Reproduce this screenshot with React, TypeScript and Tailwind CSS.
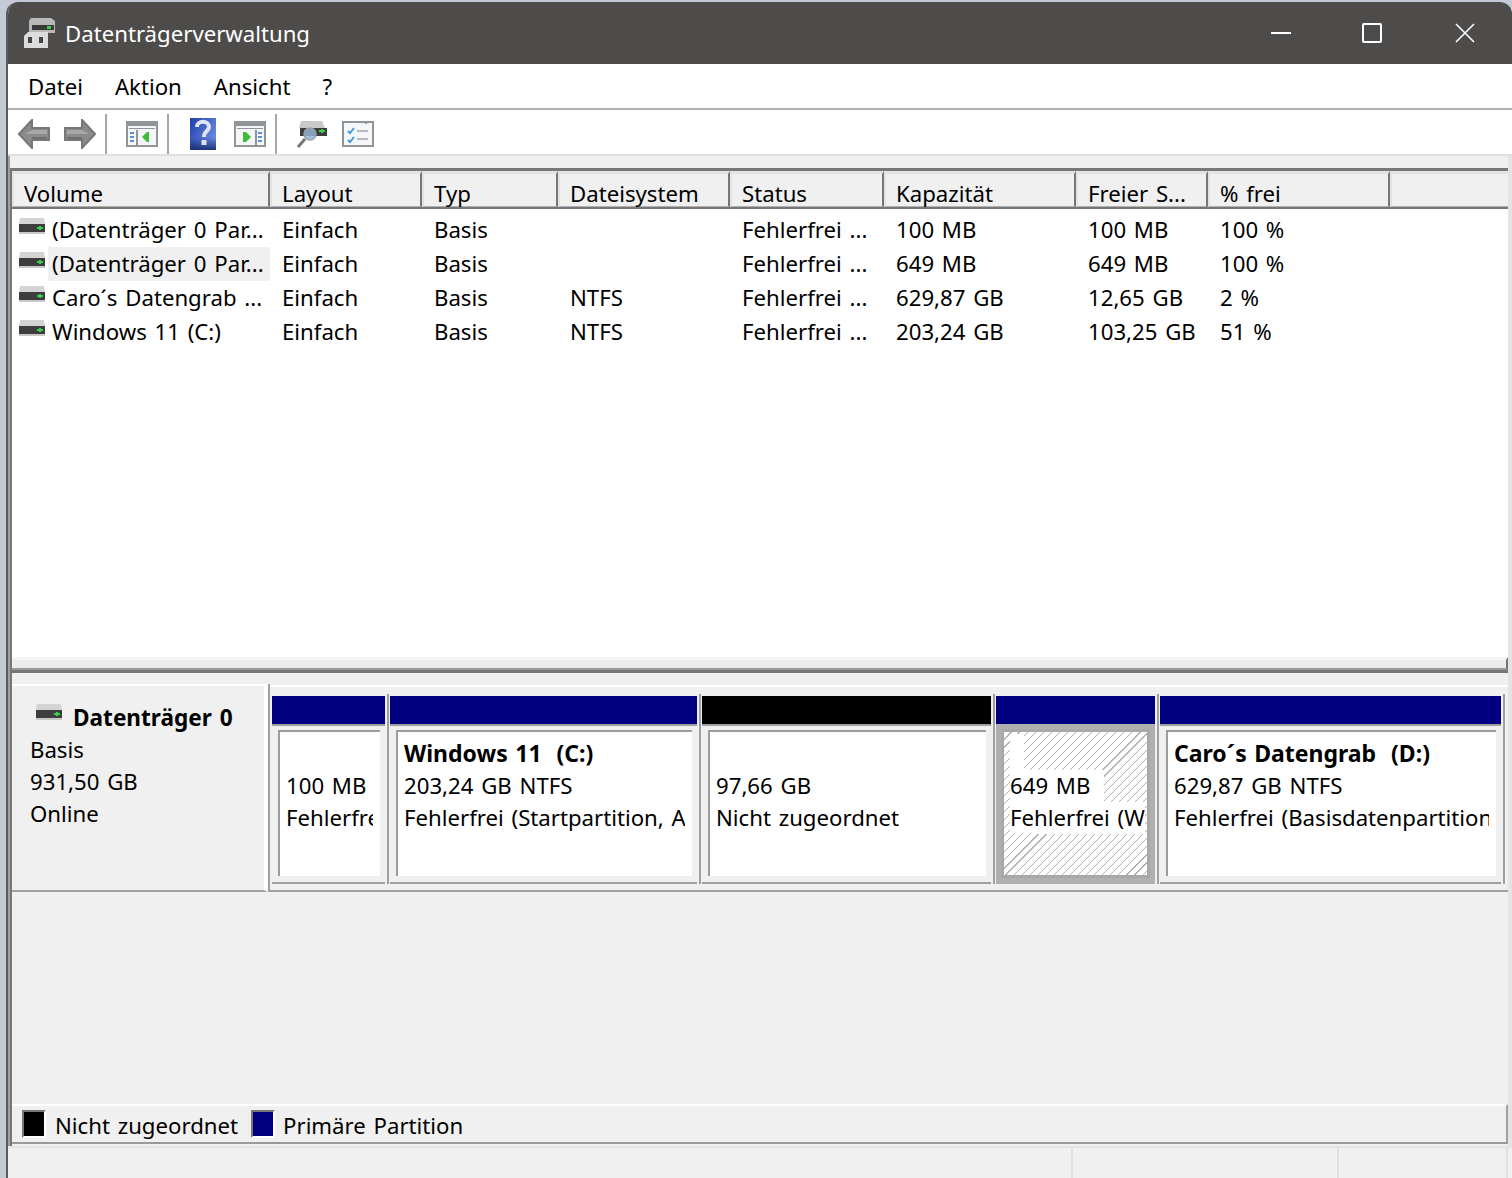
const columns = [
  { label: "Volume", width: "w-[258px]" },
  { label: "Layout", width: "w-[152px]" },
  { label: "Typ", width: "w-[136px]" },
  { label: "Dateisystem", width: "w-[172px]" },
  { label: "Status", width: "w-[154px]" },
  { label: "Kapazität", width: "w-[192px]" },
  { label: "Freier S...", width: "w-[132px]" },
  { label: "% frei", width: "w-[182px]" },
  { label: "", width: "flex-1" },
];

const rows = [
  { volume: "(Datenträger 0 Par...", layout: "Einfach", typ: "Basis", fs: "", status: "Fehlerfrei ...", cap: "100 MB", free: "100 MB", pct: "100 %" },
  { volume: "(Datenträger 0 Par...", layout: "Einfach", typ: "Basis", fs: "", status: "Fehlerfrei ...", cap: "649 MB", free: "649 MB", pct: "100 %", selected: true },
  { volume: "Caro´s Datengrab ...", layout: "Einfach", typ: "Basis", fs: "NTFS", status: "Fehlerfrei ...", cap: "629,87 GB", free: "12,65 GB", pct: "2 %" },
  { volume: "Windows 11 (C:)", layout: "Einfach", typ: "Basis", fs: "NTFS", status: "Fehlerfrei ...", cap: "203,24 GB", free: "103,25 GB", pct: "51 %" },
];

function DriveIcon({ className }: { className?: string }) {
  return (
    <svg viewBox="0 0 28 16" className={className}>
      <path d="M2 0h24l1 6H1z" fill="#d4d4d4" />
      <rect x="1" y="6" width="26" height="8" fill="#3d3d3d" />
      <rect x="1" y="14" width="26" height="2" fill="#c8c8c8" />
      <path d="M19 9h2V8h2v1h2v2h-2v1h-2v-1h-2z" fill="#35d24a" />
    </svg>
  );
}

function AppIcon() {
  return (
    <svg viewBox="0 0 32 30" className="w-8 h-[30px]">
      <path d="M7 0h20l4 3v12H5V3z" fill="#b8b8b8" />
      <rect x="8" y="7" width="22" height="5" fill="#3a3a3a" />
      <rect x="23" y="8" width="4" height="3" fill="#35d24a" />
      <path d="M4 14h20v16H0V18z" fill="#dcdcdc" />
      <rect x="4" y="19" width="4" height="6" fill="#444" />
      <rect x="15" y="19" width="4" height="6" fill="#444" />
    </svg>
  );
}

function ArrowIcon({ flip }: { flip?: boolean }) {
  return (
    <svg viewBox="0 0 32 30" className={`w-8 h-[30px] ${flip ? "-scale-x-100" : ""}`}>
      <path d="M14 1 1 15l13 14v-8h17V9H14z" fill="#8b8b8b" stroke="#777" strokeWidth="2" />
      <path d="M14 11h15v4H7z" fill="#a8a8a8" />
      <path d="M14 18h15v2H14z" fill="#6e6e6e" />
    </svg>
  );
}

function PaneIcon({ side }: { side: "left" | "right" }) {
  const left = side === "left";
  return (
    <svg viewBox="0 0 32 26" className="w-8 h-[26px]">
      <rect x="1" y="1" width="30" height="24" fill="#f4f6f8" stroke="#8f9499" strokeWidth="2" />
      <rect x="2" y="2" width="28" height="3" fill="#8f9499" />
      <rect x="3" y="7" width="26" height="1" fill="#8f9499" />
      <rect x={left ? 10 : 21} y="9" width="2" height="15" fill="#8f9499" />
      <g fill="#5b8fd0">
        <rect x={left ? 4 : 24} y="11" width="4" height="2" />
        <rect x={left ? 4 : 24} y="15" width="4" height="2" />
        <rect x={left ? 4 : 24} y="19" width="4" height="2" />
      </g>
      <path d={left ? "M16 16l5-5v10z" : "M9 11h3l5 5-5 5H9z"} fill="#3dbb3d" />
      {left && <rect x="21" y="11" width="2" height="10" fill="#3dbb3d" />}
    </svg>
  );
}

function HelpIcon() {
  return (
    <svg viewBox="0 0 26 32" className="w-[26px] h-8">
      <defs>
        <linearGradient id="helpFill" x1="0" y1="0" x2="1" y2="0.7">
          <stop offset="0" stopColor="#1f3fa8" />
          <stop offset="1" stopColor="#6d8de6" />
        </linearGradient>
        <linearGradient id="helpShade" x1="0" y1="0" x2="0" y2="1">
          <stop offset="0.6" stopColor="#14296e" stopOpacity="0" />
          <stop offset="1" stopColor="#14296e" stopOpacity="0.9" />
        </linearGradient>
      </defs>
      <rect width="26" height="32" fill="url(#helpFill)" />
      <rect width="26" height="32" fill="url(#helpShade)" />
      <path d="M7 9c0-7 12-7 12 0 0 4-5 4-5 10" fill="none" stroke="#dfe3f2" strokeWidth="4" />
      <rect x="11.5" y="22" width="5" height="5" fill="#dfe3f2" />
    </svg>
  );
}

function SearchDriveIcon() {
  return (
    <svg viewBox="0 0 32 30" className="w-8 h-[30px]">
      <path d="M5 2h21l3 7H3z" fill="#c9c9c9" />
      <rect x="4" y="9" width="27" height="8" fill="#3d3d3d" />
      <path d="M23 11h2v-1h2v1h2v2h-2v1h-2v-1h-2z" fill="#35d24a" />
      <circle cx="14" cy="15" r="6" fill="#8fb3d4" fillOpacity="0.85" stroke="#9aa0a6" strokeWidth="1.5" />
      <path d="M9 20 2 28" stroke="#777" strokeWidth="3" />
    </svg>
  );
}

function CheckListIcon() {
  return (
    <svg viewBox="0 0 32 26" className="w-8 h-[26px]">
      <rect x="1" y="1" width="30" height="24" fill="#f4f6f8" stroke="#8f9499" strokeWidth="2" />
      <rect x="23" y="0" width="2" height="3" fill="#8f9499" />
      <path d="M6 10l2 2 4-5M6 19l2 2 4-5" fill="none" stroke="#3f9ae0" strokeWidth="2" />
      <rect x="15" y="9" width="11" height="2" fill="#b5b9bd" />
      <rect x="15" y="17" width="11" height="2" fill="#b5b9bd" />
    </svg>
  );
}

function Separator() {
  return <div className="w-[2px] h-10 bg-[#a6a6a6]" />;
}

function Divider() {
  return <div className="ml-[2px] mr-[1px] -mt-[2px] w-[2px] h-[190px] bg-[#a0a0a0] shrink-0" />;
}

function Partition({
  width,
  bar,
  title,
  size,
  status,
}: {
  width: string;
  bar: string;
  title?: string;
  size: string;
  status: string;
}) {
  return (
    <div className={`${width} shrink-0 flex flex-col`}>
      <div className={`h-7 ${bar}`} />
      <div className="h-[160px] border-y-2 border-[#a0a0a0] bg-[#f0f0f0] pt-[4px] pl-[6px] pr-[5px]">
        <div className="h-[146px] border-l-2 border-t-2 border-[#9c9c9c] bg-white pl-[6px] pr-[7px] whitespace-nowrap">
          <div className="h-8 mt-[6px] leading-[30px] font-bold text-[23px] [word-spacing:1.5px] whitespace-pre">{title ?? ""}</div>
          <div className="h-8 leading-8">{size}</div>
          <div className="h-8 leading-8 overflow-hidden">{status}</div>
        </div>
      </div>
    </div>
  );
}

// the selected one is drawn hatched, text keeps a white box behind it
function SelectedPartition({ width, bar, size, status }: { width: string; bar: string; size: string; status: string }) {
  return (
    <div className={`${width} shrink-0 flex flex-col`}>
      <div className={`h-7 ${bar}`} />
      <div className="h-[160px] bg-[#b0b0b0] pt-[5px] px-[5px]">
        <div className="h-[149px] border-[3px] border-[#a8a8a8] bg-white bg-[repeating-linear-gradient(135deg,#ffffff_0,#ffffff_4.9px,#b0b0b0_4.9px,#b0b0b0_5.7px)] pl-[6px] pr-[2px] pt-[2px] whitespace-nowrap">
          <div className="h-[36px] w-[14px] bg-white" />
          <div className="h-8 leading-8"><span className="inline-block bg-white pr-[14px]">{size}</span></div>
          <div className="h-8 leading-8 overflow-hidden"><span className="inline-block bg-white">{status}</span></div>
        </div>
      </div>
    </div>
  );
}

export default function App() {
  return (
    <div className="w-[1512px] h-[1178px] overflow-hidden bg-[#c3cad6] pt-[2px] pl-[6px] font-['Noto_Sans','Open_Sans',sans-serif] text-[22.2px] [word-spacing:2px] text-black">
      <div className="h-[1176px] flex flex-col bg-[#f0f0f0] border-l-2 border-[#5a5a5a] rounded-tl-[12px] rounded-tr-[12px] overflow-hidden">
        {/* title bar */}
        <div className="h-[62px] shrink-0 bg-[#4d4c4a] text-white flex items-center -ml-[2px] pl-[18px]">
          <AppIcon />
          <span className="ml-[9px] mt-[2px]">Datenträgerverwaltung</span>
          <div className="ml-auto flex items-center">
            <div className="w-5 h-[2px] bg-white mr-[71px]" />
            <div className="w-5 h-5 border-2 border-white rounded-[2px] mr-[73px]" />
            <svg viewBox="0 0 20 20" className="w-5 h-5 mr-[37px]">
              <path d="M1 1l18 18M19 1 1 19" stroke="#fff" strokeWidth="1.6" />
            </svg>
          </div>
        </div>

        {/* menu */}
        <div className="h-[46px] shrink-0 bg-white border-b-2 border-[#b0b0b0] flex items-center gap-[32px] pl-[20px] pt-[2px]">
          <span>Datei</span>
          <span>Aktion</span>
          <span>Ansicht</span>
          <span>?</span>
        </div>

        {/* toolbar */}
        <div className="h-[46px] shrink-0 bg-white border-b-2 border-[#e0e0e0] flex items-center pl-[10px] pt-[4px]">
          <ArrowIcon />
          <div className="w-[14px]" />
          <ArrowIcon flip />
          <div className="w-[9px]" />
          <Separator />
          <div className="w-[19px]" />
          <PaneIcon side="left" />
          <div className="w-[9px]" />
          <Separator />
          <div className="w-[21px]" />
          <HelpIcon />
          <div className="w-[18px]" />
          <PaneIcon side="right" />
          <div className="w-[9px]" />
          <Separator />
          <div className="w-[19px]" />
          <SearchDriveIcon />
          <div className="w-[14px]" />
          <CheckListIcon />
        </div>

        <div className="flex-1 min-h-0 flex flex-col pt-[12px] border-l-2 border-[#a0a0a0] border-r-4 border-r-[#e4e4e4]">
          <div className="flex-1 min-h-0 flex flex-col border-l-2 border-[#777]">
            {/* volume list */}
            <div className="h-[505px] shrink-0 flex flex-col bg-white border-y-[3px] border-[#777]">
              <div className="h-[38px] shrink-0 flex bg-[#f0f0f0] border-b-2 border-[#777]">
                {columns.map((col) => (
                  <div
                    key={col.label || "rest"}
                    className={`${col.width} shrink-0 border-t-[3px] border-l-2 border-b border-t-[#e3e3e3] border-l-[#e3e3e3] border-b-[#b0b0b0] pl-[10px] pt-[5px] leading-[30px] whitespace-nowrap ${
                      col.label === "" ? "" : "border-r-2 border-r-[#777]"
                    }`}
                  >
                    {col.label}
                  </div>
                ))}
              </div>
              <div className="flex-1 pt-[4px]">
                {rows.map((row, i) => (
                  <div key={i} className="h-[34px] flex items-center whitespace-nowrap">
                    <div className="w-[258px] flex items-center pl-[6px] h-full">
                      <DriveIcon className="w-7 h-4 mb-[8px] shrink-0" />
                      <span className={`ml-[2px] pl-[4px] h-full w-[222px] leading-[34px] ${row.selected ? "bg-[#f0f0f0]" : ""}`}>
                        {row.volume}
                      </span>
                    </div>
                    <div className="w-[152px] pl-[12px]">{row.layout}</div>
                    <div className="w-[136px] pl-[12px]">{row.typ}</div>
                    <div className="w-[172px] pl-[12px]">{row.fs}</div>
                    <div className="w-[154px] pl-[12px]">{row.status}</div>
                    <div className="w-[192px] pl-[12px]">{row.cap}</div>
                    <div className="w-[132px] pl-[12px]">{row.free}</div>
                    <div className="pl-[12px]">{row.pct}</div>
                  </div>
                ))}
              </div>
              <div className="h-[13px] shrink-0 bg-[#ececec] border-t-[3px] border-[#f4f4f4] border-b-2 border-b-[#999] border-r-2 border-r-[#777]" />
            </div>

            {/* disk map */}
            <div className="flex-1 min-h-0 pt-[11px] flex items-start">
              <div className="w-[256px] h-[208px] shrink-0 bg-[#f0f0f0] border-t-2 border-white border-b-2 border-b-[#a0a0a0] border-r-4 border-r-white pl-[18px] pt-[16px]">
                <div className="flex items-center h-8">
                  <DriveIcon className="w-7 h-4 mb-[12px] ml-[5px]" />
                  <span className="ml-[10px] font-bold text-[22.6px]">Datenträger 0</span>
                </div>
                <div className="h-8 leading-8">Basis</div>
                <div className="h-8 leading-8">931,50 GB</div>
                <div className="h-8 leading-8">Online</div>
              </div>
              <div className="w-[2px] h-[208px] shrink-0 bg-[#a0a0a0]" />
              <div className="flex-1 h-[208px] mt-[1px] border-t-2 border-white pt-[9px] pl-[2px]">
                <div className="flex pb-[6px] border-b-2 border-[#a0a0a0] -ml-[2px] pl-[2px]">
                  <Partition width="w-[113px]" bar="bg-[#000080]" size="100 MB" status="Fehlerfrei" />
                  <Divider />
                  <Partition width="w-[307px]" bar="bg-[#000080]" title="Windows 11  (C:)" size="203,24 GB NTFS" status="Fehlerfrei (Startpartition, A" />
                  <Divider />
                  <Partition width="w-[289px]" bar="bg-black" size="97,66 GB" status="Nicht zugeordnet" />
                  <Divider />
                  <SelectedPartition width="w-[159px]" bar="bg-[#000080]" size="649 MB" status="Fehlerfrei (W" />
                  <Divider />
                  <Partition width="w-[341px]" bar="bg-[#000080]" title="Caro´s Datengrab  (D:)" size="629,87 GB NTFS" status="Fehlerfrei (Basisdatenpartition" />
                  <Divider />
                </div>
              </div>
            </div>

            {/* legend */}
            <div className="h-[40px] shrink-0 bg-[#f0f0f0] border-t-2 border-white border-b-2 border-b-[#999] border-r-2 border-r-[#a0a0a0] flex items-center pl-[10px]">
              <div className="w-[24px] h-[28px] bg-black border-2 border-t-[#777] border-l-[#777] border-r-white border-b-white" />
              <span className="ml-[9px] pt-[3px]">Nicht zugeordnet</span>
              <div className="ml-[13px] w-[24px] h-[28px] bg-[#000080] border-2 border-t-[#777] border-l-[#777] border-r-white border-b-white" />
              <span className="ml-[8px] pt-[3px]">Primäre Partition</span>
            </div>
            <div className="h-[2px] shrink-0" />
          </div>
        </div>

        {/* status bar */}
        <div className="h-[32px] shrink-0 border-t-2 border-[#e4e4e4] flex justify-end pr-[4px]">
          <div className="w-[266px] border-l-2 border-[#e0e0e0]" />
          <div className="w-[171px] border-x-2 border-[#e0e0e0]" />
        </div>
      </div>
    </div>
  );
}
